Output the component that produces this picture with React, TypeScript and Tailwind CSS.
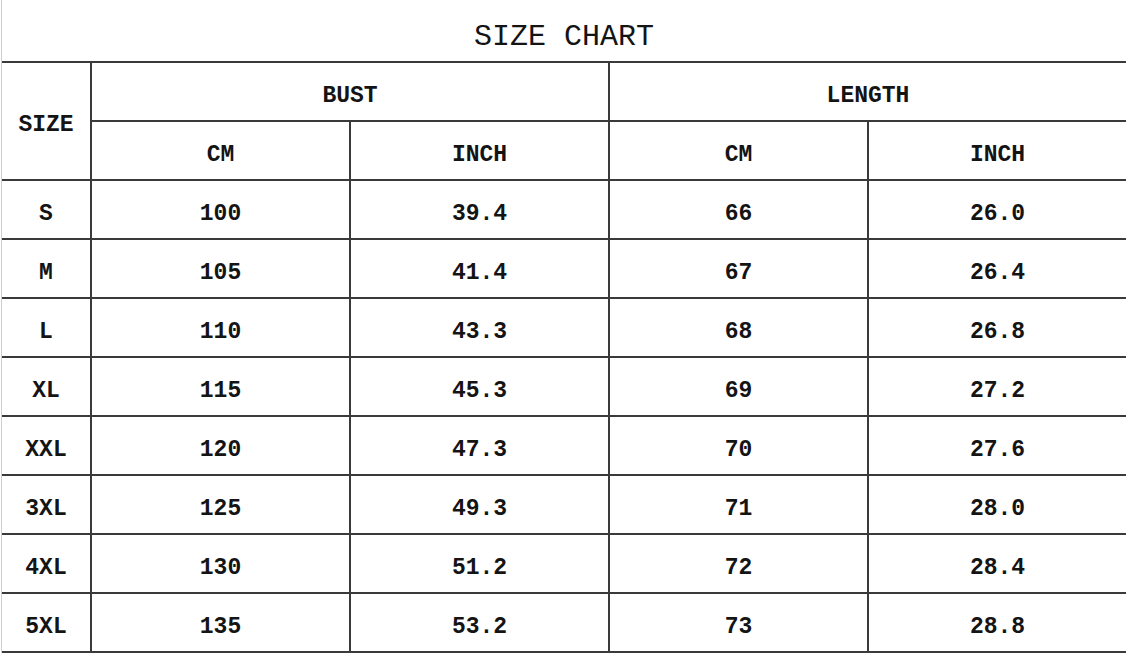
const rows = [
  ["S", "100", "39.4", "66", "26.0"],
  ["M", "105", "41.4", "67", "26.4"],
  ["L", "110", "43.3", "68", "26.8"],
  ["XL", "115", "45.3", "69", "27.2"],
  ["XXL", "120", "47.3", "70", "27.6"],
  ["3XL", "125", "49.3", "71", "28.0"],
  ["4XL", "130", "51.2", "72", "28.4"],
  ["5XL", "135", "53.2", "73", "28.8"],
];

const cell =
  "flex items-center justify-center h-[59px] border-b-2 border-[#3a3a3a] pt-[9px]";

export default function App() {
  return (
    <div className="w-[1130px] h-[654px] bg-white overflow-hidden">
      <div className="ml-[1px] w-[1125px] border-l border-[#c9cfe0] text-[#141414] font-['Liberation_Mono',monospace]">
        <div className="h-[61px] flex items-center justify-center pt-[14px] text-[30px]">
          SIZE CHART
        </div>

        <div className="grid grid-cols-[90px_259px_259px_259px_257px] border-t-2 border-[#3a3a3a] font-bold text-[23px]">
          <div className={`${cell} row-span-2 h-auto border-r-2`}>SIZE</div>
          <div className={`${cell} col-span-2 border-r-2`}>BUST</div>
          <div className={`${cell} col-span-2`}>LENGTH</div>

          <div className={`${cell} border-r-2`}>CM</div>
          <div className={`${cell} border-r-2`}>INCH</div>
          <div className={`${cell} border-r-2`}>CM</div>
          <div className={cell}>INCH</div>

          {rows.map((r) =>
            r.map((v, i) => (
              <div
                key={r[0] + i}
                className={`${cell} ${i < 4 ? "border-r-2" : ""}`}
              >
                {v}
              </div>
            ))
          )}
        </div>
      </div>
    </div>
  );
}
